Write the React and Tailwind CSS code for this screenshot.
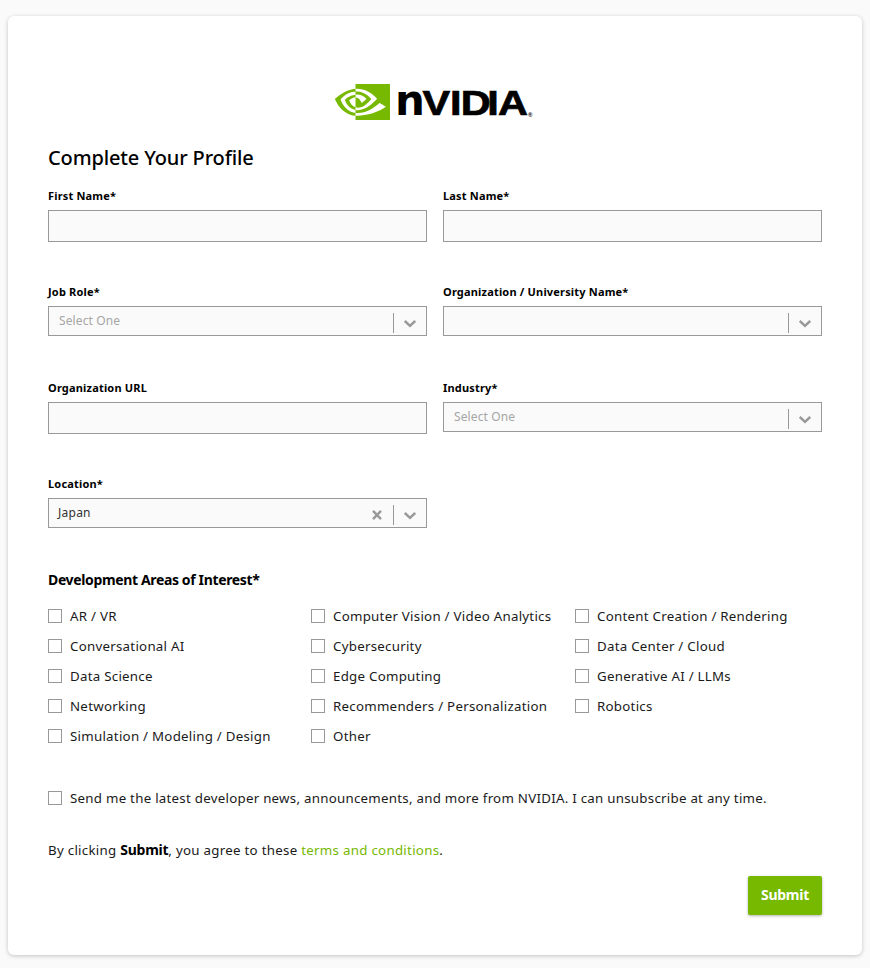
import React from 'react';

const areas = [
  'AR / VR',
  'Computer Vision / Video Analytics',
  'Content Creation / Rendering',
  'Conversational AI',
  'Cybersecurity',
  'Data Center / Cloud',
  'Data Science',
  'Edge Computing',
  'Generative AI / LLMs',
  'Networking',
  'Recommenders / Personalization',
  'Robotics',
  'Simulation / Modeling / Design',
  'Other',
];

function Logo() {
  return (
    <svg className="block" width="204" height="52" viewBox="0 -10 204 52" role="img" aria-label="NVIDIA">
      <path
        transform="translate(0 -8.3) scale(2.292 2.27)"
        fill="#76b900"
        d="M8.948 8.798v-1.43a6.7 6.7 0 0 1 .424-.018c3.922-.124 6.493 3.374 6.493 3.374s-2.774 3.851-5.75 3.851c-.398 0-.787-.062-1.158-.185v-4.346c1.528.185 1.837.857 2.747 2.385l2.04-1.714s-1.492-1.952-4-1.952a6.016 6.016 0 0 0-.796.035m0-4.735v2.138l.424-.027c5.45-.185 9.01 4.47 9.01 4.47s-4.08 4.964-8.33 4.964c-.37 0-.733-.035-1.095-.097v1.325c.3.035.61.062.91.062 3.957 0 6.82-2.023 9.593-4.408.459.371 2.34 1.263 2.73 1.652-2.633 2.208-8.772 3.984-12.253 3.984-.335 0-.653-.018-.971-.053v1.864H24V4.063zm0 10.326v1.131c-3.657-.654-4.673-4.46-4.673-4.46s1.758-1.944 4.673-2.262v1.237H8.94c-1.528-.186-2.73 1.245-2.73 1.245s.68 2.412 2.739 3.11M2.456 10.9s2.164-3.197 6.5-3.533V6.201C4.153 6.59 0 10.653 0 10.653s2.35 6.802 8.948 7.42v-1.237c-4.84-.6-6.492-5.936-6.492-5.936z"
      />
      <g fill="#000" fontWeight="700">
        <text x="60" y="32" fontSize="42" fontFamily="DejaVu Sans">n</text>
        <text
          x="73 95.9 104.7 126.8 135.8"
          y="31.7"
          fontSize="34.5"
          transform="scale(1.2 1)"
          stroke="#000"
          strokeWidth="0.7"
          fontFamily="Liberation Sans"
        >
          VIDIA
        </text>
        <text x="193" y="33.5" fontSize="6" fontFamily="Liberation Sans">®</text>
      </g>
    </svg>
  );
}

function Chevron() {
  return (
    <svg className="block" width="12" height="8" viewBox="0 0 12 8" fill="none" stroke="#999" strokeWidth="2.5">
      <path d="M.8 1L6 5.8 11.2 1" />
    </svg>
  );
}

function Label({ children }) {
  return <label className="block h-[22px] text-[11px] leading-4 font-bold text-black tracking-[0.18px]">{children}</label>;
}

function TextField({ label }) {
  return (
    <div className="h-24">
      <Label>{label}</Label>
      <input type="text" className="block w-full h-8 border border-[#999] bg-[#fafafa] px-2 outline-none" />
    </div>
  );
}

function SelectField({ label, placeholder, value }) {
  return (
    <div className="h-24">
      <Label>{label}</Label>
      <div className="flex h-[30px] border border-[#999] bg-[#fafafa] text-[12px] leading-7 tracking-[0.12px]">
        <div className="flex-1">
          {value ? (
            <span className="pl-[9px] text-[#333] tracking-[0.25px]">{value}</span>
          ) : (
            <span className="pl-2.5 text-[#a6a6a6]">{placeholder}</span>
          )}
        </div>
        {value && (
          <svg className="mt-[11px] mr-[11px]" width="10" height="10" viewBox="0 0 10 10" stroke="#999" strokeWidth="2.4">
            <path d="M1 .8l8 8.4M9 .8L1 9.2" />
          </svg>
        )}
        <div className="mt-1.5 h-5 w-px bg-[#999]" />
        <div className="w-8 pl-2.5 pt-[13px]">
          <Chevron />
        </div>
      </div>
    </div>
  );
}

function Checkbox({ children }) {
  return (
    <label className="flex h-[30px] items-center text-[13.3px] tracking-[0.26px] text-[#1a1a1a]">
      <span className="mr-2 size-3.5 shrink-0 border border-[#999] bg-white" />
      <span className="pt-0.5 whitespace-nowrap">{children}</span>
    </label>
  );
}

export default function App() {
  return (
    <div className="h-[968px] bg-[#fafafa] px-2 pt-4 font-['Noto_Sans','Open_Sans',sans-serif]">
      <form className="h-[939px] w-[854px] rounded-md bg-white px-10 pt-[57px] shadow-[0_1px_4px_rgba(0,0,0,0.22)]">
        <div className="pl-[287px]">
          <Logo />
        </div>
        <h1 className="mt-[18px] text-[20px] leading-[30px] font-medium text-black tracking-[-0.14px]">Complete Your Profile</h1>

        <div className="mt-[15px] grid grid-cols-2 gap-x-4">
          <TextField label="First Name*" />
          <TextField label="Last Name*" />
          <SelectField label="Job Role*" placeholder="Select One" />
          <SelectField label="Organization / University Name*" />
          <TextField label="Organization URL" />
          <SelectField label="Industry*" placeholder="Select One" />
          <SelectField label="Location*" value="Japan" />
        </div>

        <h2 className="-mt-1 text-[14px] leading-6 font-bold text-black tracking-[-0.36px]">Development Areas of Interest*</h2>
        <div className="mt-[9px] grid grid-cols-[263px_264px_1fr]">
          {areas.map((name) => (
            <Checkbox key={name}>{name}</Checkbox>
          ))}
        </div>

        <div className="mt-8">
          <Checkbox>
            Send me the latest developer news, announcements, and more from NVIDIA. I can unsubscribe at any time.
          </Checkbox>
        </div>

        <p className="mt-[27px] text-[13.3px] leading-5 tracking-[0.28px] text-[#1a1a1a]">
          By clicking <b className="text-[14px] text-black tracking-[-0.25px]">Submit</b>, you agree to these{' '}
          <a href="#" className="text-[#76b900]">terms and conditions</a>.
        </p>

        <div className="mt-4 flex justify-end">
          <button type="button" className="h-[39px] w-[74px] rounded-xs bg-[#76b900] pb-0.5 text-[14px] font-bold text-white tracking-[-0.25px] shadow-[0_1px_3px_rgba(0,0,0,0.3)]">
            Submit
          </button>
        </div>
      </form>
    </div>
  );
}
